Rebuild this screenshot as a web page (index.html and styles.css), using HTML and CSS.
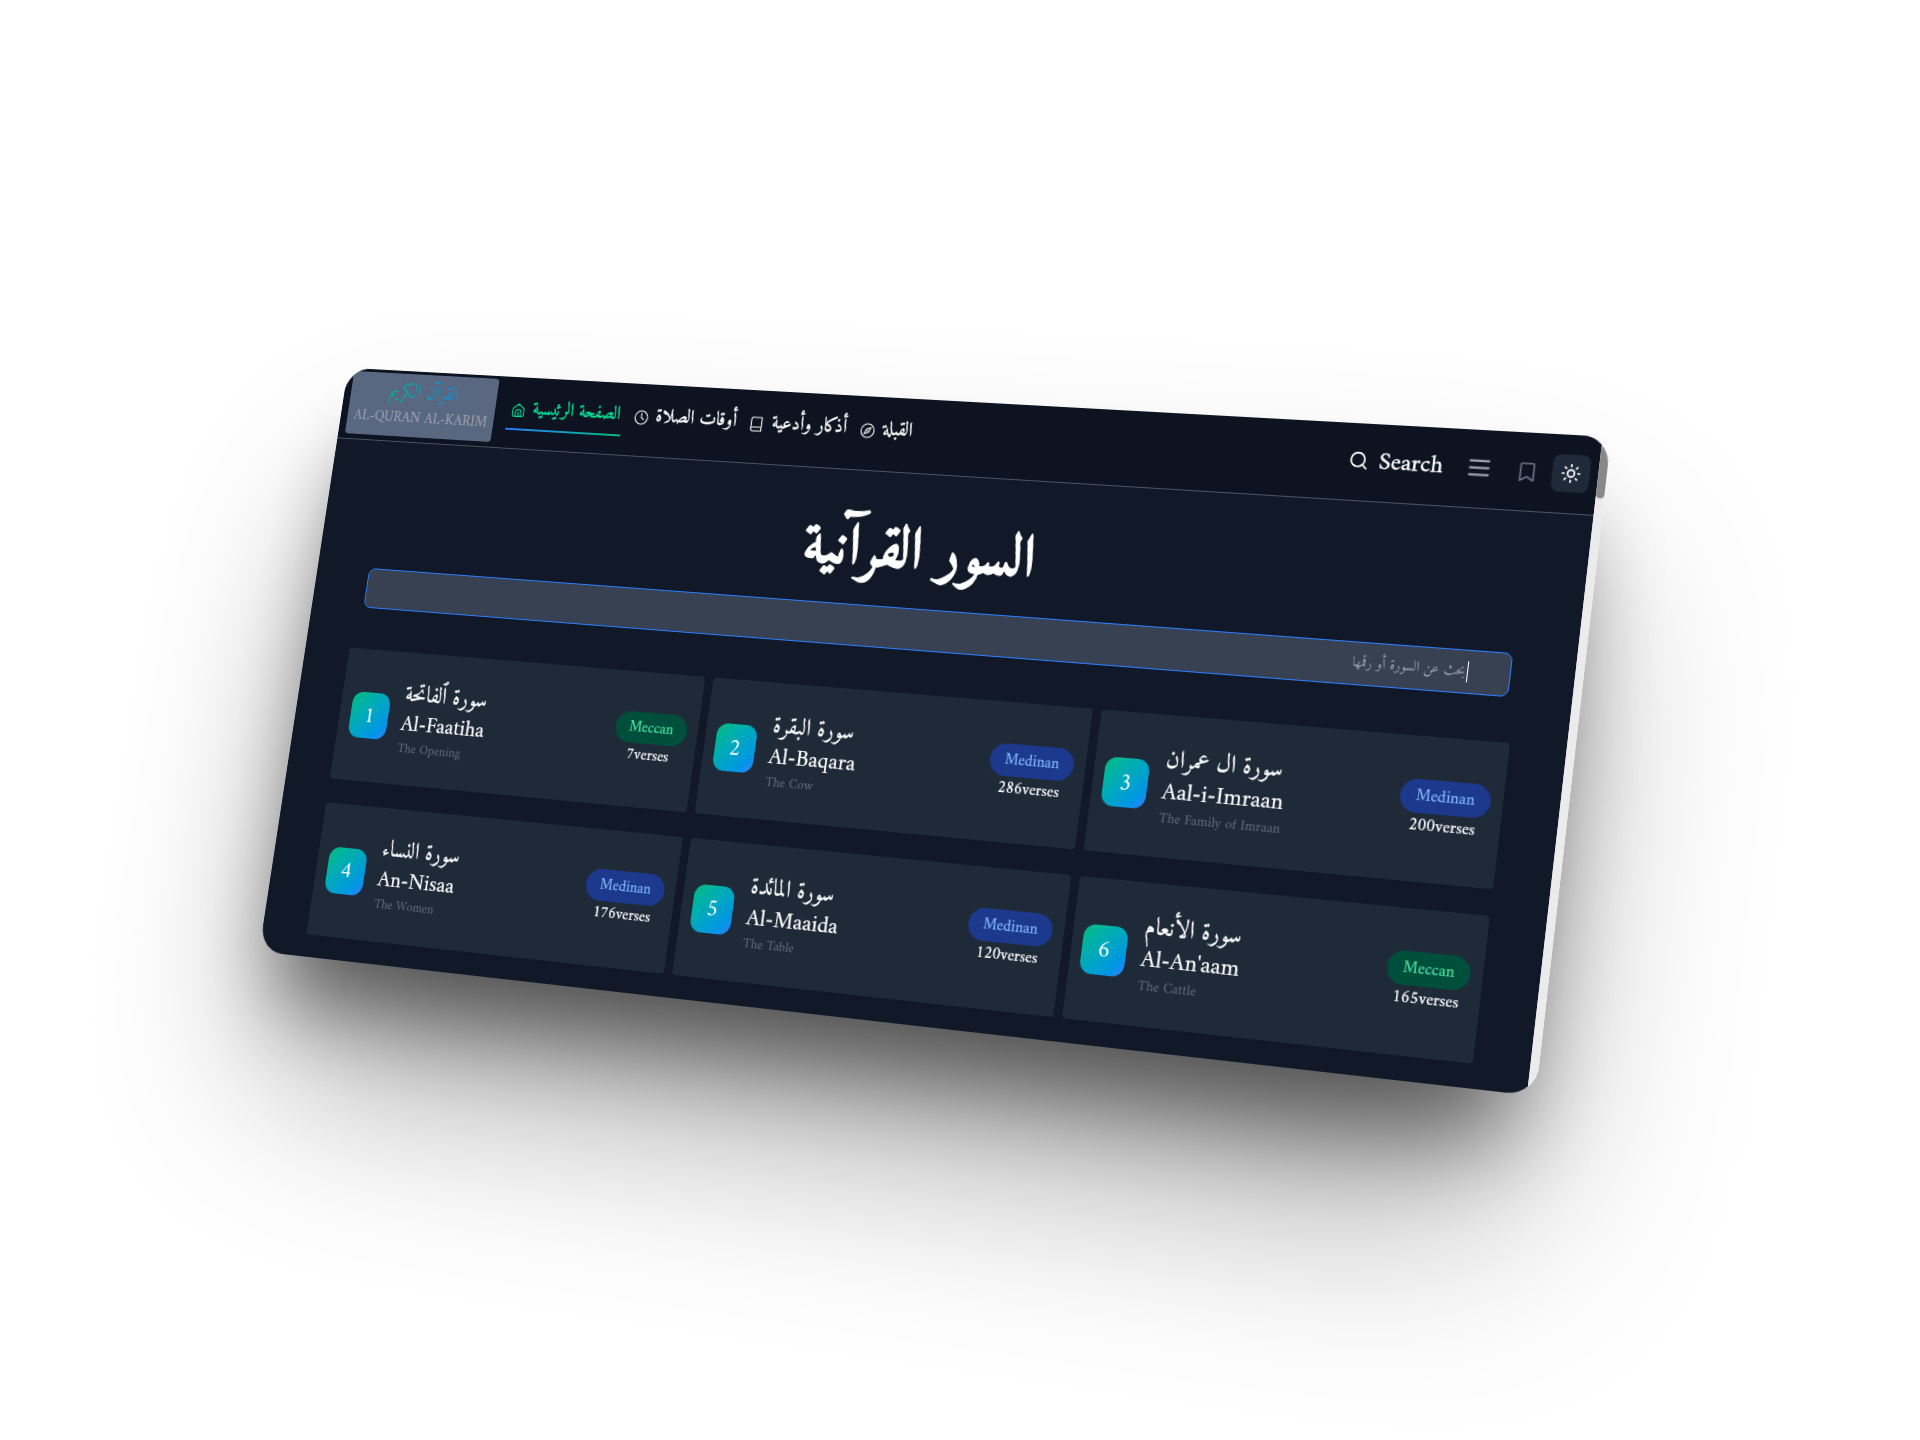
FILE: index.html
```html
<!DOCTYPE html>
<html lang="ar">
<head>
<meta charset="utf-8">
<title>القرآن الكريم</title>
<link rel="stylesheet" href="styles.css">
</head>
<body>
<div class="window">
  <div class="page">
    <header class="header">
      <div class="logo">
        <span class="logo-ar" lang="ar">القُرآن الكَريم</span>
        <span class="logo-en">AL-QURAN AL-KARIM</span>
      </div>
      <nav class="nav">
        <a class="nav-item active">
          <svg class="ico" viewBox="0 0 24 24"><path d="M2.500 10.500a3 3 0 0 1 1.100-2.300L12 1.800l8.400 6.400a3 3 0 0 1 1.100 2.300V19a2.500 2.500 0 0 1-2.500 2.500H5A2.500 2.500 0 0 1 2.500 19z"/><path d="M7.500 21.500V14a3 3 0 0 1 3-3h3a3 3 0 0 1 3 3v7.500M12 15v6.500"/></svg>
          <span class="label">الصفحة الرئيسية</span>
        </a>
        <a class="nav-item">
          <svg class="ico" viewBox="0 0 24 24"><circle cx="12" cy="12" r="10.500"/><path d="M12 5.500V12l4 3"/></svg>
          <span class="label">أوقات الصلاة</span>
        </a>
        <a class="nav-item">
          <svg class="ico" viewBox="0 0 24 24"><path d="M3.500 19.500V3.500a2 2 0 0 1 2-2h14a1 1 0 0 1 1 1v20h-14a3 3 0 0 1 0-6h14"/></svg>
          <span class="label">أذكار وأدعية</span>
        </a>
        <a class="nav-item">
          <svg class="ico" viewBox="0 0 24 24"><circle cx="12" cy="12" r="10.500"/><path d="m16.800 7.200-2.600 7-7 2.600 2.600-7z"/><path d="M11.500 12.500l1-1"/></svg>
          <span class="label">القبلة</span>
        </a>
      </nav>
      <div class="tools">
        <span class="search"><svg class="ico ico-search" viewBox="0 0 24 24"><circle cx="11" cy="11" r="8"/><path d="m21 21-4.300-4.300"/></svg>Search</span>
        <svg class="ico ico-menu" viewBox="0 0 24 24"><path d="M4 6h16M4 12h16M4 18h16"/></svg>
        <svg class="ico ico-mark" viewBox="0 0 24 24"><path d="M19 21l-7-4-7 4V4.500a1.500 1.500 0 0 1 1.500-1.500h11a1.500 1.500 0 0 1 1.500 1.500z"/></svg>
        <span class="theme"><svg class="ico ico-sun" viewBox="0 0 24 24"><circle cx="12" cy="12" r="4"/><path d="M12 2v2M12 20v2M4.900 4.900l1.400 1.400M17.700 17.700l1.400 1.400M2 12h2M20 12h2M6.300 17.700l-1.400 1.400M19.100 4.900l-1.400 1.400"/></svg></span>
      </div>
    </header>
    <h1 class="title">السور القرآنية</h1>
    <div class="field"><span class="hint">بحث عن السورة أو رقمها</span></div>
    <main class="grid">
      <article class="card"><div class="num">1</div><div class="names"><span class="ar">سورة ٱلفاتحة</span><span class="en">Al-Faatiha</span><span class="sub">The Opening</span></div><div class="meta"><span class="badge meccan">Meccan</span><span class="verses">7verses</span></div></article>
      <article class="card"><div class="num">2</div><div class="names"><span class="ar">سورة البقرة</span><span class="en">Al-Baqara</span><span class="sub">The Cow</span></div><div class="meta"><span class="badge medinan">Medinan</span><span class="verses">286verses</span></div></article>
      <article class="card"><div class="num">3</div><div class="names"><span class="ar">سورة ال عمران</span><span class="en">Aal-i-Imraan</span><span class="sub">The Family of Imraan</span></div><div class="meta"><span class="badge medinan">Medinan</span><span class="verses">200verses</span></div></article>
      <article class="card"><div class="num">4</div><div class="names"><span class="ar">سورة النساء</span><span class="en">An-Nisaa</span><span class="sub">The Women</span></div><div class="meta"><span class="badge medinan">Medinan</span><span class="verses">176verses</span></div></article>
      <article class="card"><div class="num">5</div><div class="names"><span class="ar">سورة المائدة</span><span class="en">Al-Maaida</span><span class="sub">The Table</span></div><div class="meta"><span class="badge medinan">Medinan</span><span class="verses">120verses</span></div></article>
      <article class="card"><div class="num">6</div><div class="names"><span class="ar">سورة الأنعام</span><span class="en">Al-An'aam</span><span class="sub">The Cattle</span></div><div class="meta"><span class="badge meccan">Meccan</span><span class="verses">165verses</span></div></article>
    </main>
  </div>
  <div class="scrollbar"><div class="thumb"></div></div>
</div>
</body>
</html>
```
FILE: styles.css
```css
* { box-sizing: border-box; }
html, body { margin: 0; height: 100%; overflow: hidden; background: #fff; }
body { font-family: Amiri, "Liberation Serif", "DejaVu Sans", serif; color: #fff; }

.window {
  display: flex;
  width: 1350px;
  height: 620px;
  overflow: hidden;
  border-radius: 27px;
  transform-origin: 0 0;
  transform: matrix3d(0.803481, 0.015437, 0, -0.00008198, -0.150677, 0.915129, 0, -0.0000275, 0, 0, 1, 0, 348.1, 367.8, 0, 1);
  box-shadow: 0 68px 90px -25px rgba(0, 0, 0, .5), 0 125px 200px -25px rgba(0, 0, 0, .42);
}
.page { flex: 1; min-width: 0; display: flex; flex-direction: column; background: #111827; }
.scrollbar { width: 8.500px; background: #ebebeb; }
.thumb { height: 59px; background: #888; border-radius: 4px; }

.header {
  display: flex;
  height: 76px;
  padding: 3px 8px 0 8px;
  background: #0d1320;
  border-bottom: 1px solid #4a5565;
}
.logo {
  display: flex; flex-direction: column; align-items: center;
  width: 172px; height: 67px; padding-top: 6.500px;
  border-radius: 4px; background: #5a6780;
}
.logo-ar {
  font-size: 20px; line-height: 27px; white-space: nowrap;
  background: linear-gradient(to right, #00b38c, #0d8fe8);
  -webkit-background-clip: text; background-clip: text; color: transparent;
}
.logo-en { font-size: 16px; line-height: 27px; color: #9ca4b2; white-space: nowrap; }

.ico { width: 16px; height: 16px; flex: none; fill: none; stroke: currentColor; stroke-width: 1.700; stroke-linecap: round; stroke-linejoin: round; }
.nav { display: flex; gap: 6.500px; margin-left: 15px; height: 53px; }
.nav-item { display: flex; align-items: center; gap: 8.300px; padding: 11px 4px 0; height: 53px; border-bottom: 2px solid transparent; white-space: nowrap; }
.nav-item .ico { margin-top: 2px; }
.nav-item .label { font-size: 20px; line-height: 28px; -webkit-text-stroke: .3px currentColor; }
.nav-item.active { padding-right: 3px; margin-right: 2px; color: #00e298; border-image: linear-gradient(to right, #2b7fff, #00bc7d) 1; }
.nav-item.active .label { font-size: 19.800px; }

.tools { display: flex; align-items: center; margin-left: auto; height: 67px; }
.search { display: flex; align-items: center; gap: 10px; font-size: 24px; -webkit-text-stroke: .35px currentColor; margin-right: 21.500px; }
.ico-search { width: 20.500px; height: 20.500px; stroke-width: 2; }
.ico-menu { width: 27px; height: 27px; stroke-width: 2; color: #99a1af; margin-right: 22px; }
.ico-mark { width: 22px; height: 22px; margin-top: 2px; color: #6a7282; stroke-width: 1.800; margin-right: 13px; }
.theme { display: flex; align-items: center; justify-content: center; width: 36px; height: 36px; border-radius: 8px; background: #1e2939; }
.ico-sun { width: 20px; height: 20px; stroke-width: 2; }

.title { margin: 36px 0 0; height: 98.500px; font-size: 59.800px; line-height: 90px; text-align: center; font-weight: 700; white-space: nowrap; direction: rtl; -webkit-text-stroke: .8px currentColor; }
.field { display: flex; align-items: center; justify-content: flex-end; margin: 0 61px; height: 42px; padding-right: 40px; border: 1px solid #2b7fff; border-radius: 8px; background: #374151; }
.hint { direction: rtl; font-size: 14px; line-height: 20px; color: #99a1af; padding-right: 1px; border-right: 1px solid #fff; white-space: nowrap; }

.grid { display: grid; grid-template-columns: 408fr 405fr 405fr; grid-auto-rows: 138px; gap: 24.500px 8.500px; padding: 43.500px 53.500px 0 52px; }
.card { display: flex; align-items: center; min-width: 0; padding: 0 12px 0 11.800px; border-radius: 4px; background: #1f2a39; box-shadow: 0 1px 3px rgba(0, 0, 0, .15); }
.card:nth-child(3n + 1) { padding-left: 12.800px; }
.num { display: flex; align-items: center; justify-content: center; width: 44.500px; height: 48px; padding-top: 1px; flex: none; border-radius: 12px; font-size: 24px; background: linear-gradient(to bottom right in oklab, #00bc7d, #0095e6 80%, #2b7fff); }
.names { display: flex; flex-direction: column; align-items: flex-start; margin-left: 15.900px; white-space: nowrap; }
.ar { font-size: 23.800px; line-height: 32px; -webkit-text-stroke: .2px currentColor; }
.en { font-size: 23.800px; line-height: 31px; -webkit-text-stroke: .15px currentColor; }
.sub { font-size: 14px; line-height: 20px; color: #626b7b; }
.meta { display: flex; flex-direction: column; align-items: center; margin-left: auto; }
.badge { height: 32px; padding: 0 15.300px; border-radius: 16px; font-size: 16px; line-height: 33px; -webkit-text-stroke: .15px currentColor; }
.meccan { background: #004f3b; color: #4be3a5; }
.medinan { background: #1c398e; color: #82b8fa; }
.verses { font-size: 16px; line-height: 24.500px; -webkit-text-stroke: .2px currentColor; }
```
